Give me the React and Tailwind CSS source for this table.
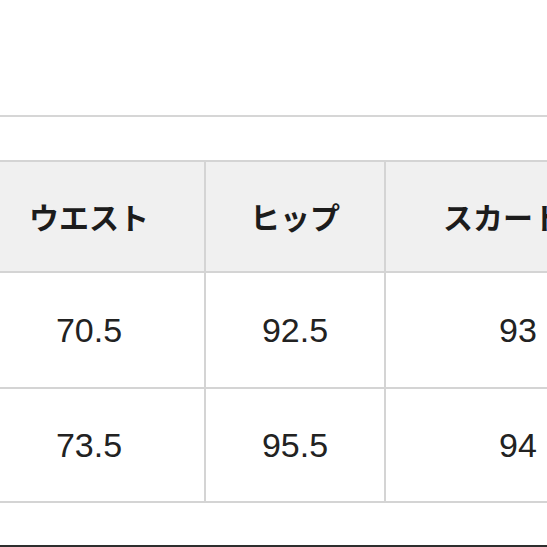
export default function App() {
  const head = ['ウエスト', 'ヒップ', 'スカート丈'];
  const rows = [
    ['70.5', '92.5', '93'],
    ['73.5', '95.5', '94'],
  ];
  const widths = ['w-[232px]', 'w-[180px]', 'w-[266px]'];

  return (
    <div className="relative w-[547px] h-[547px] overflow-hidden bg-white">
      <div className="h-[115px]" />
      <div className="h-[2px] bg-[#d6d6d6]" />
      <div className="h-[43px]" />
      <table
        className="ml-[-28px] border-collapse table-fixed w-[678px]"
        style={{ fontFamily: '"Liberation Sans", Arial, sans-serif' }}
      >
        <thead>
          <tr className="bg-[#f0f0f0]">
            {head.map((h, i) => (
              <th
                key={i}
                className={`${widths[i]} h-[111px] border-2 border-[#d4d4d4] p-0 text-center align-middle text-[30px] font-bold text-[#1c1c1c]`}
                style={{ fontFamily: '"Noto Sans CJK JP", sans-serif' }}
              >
                {h}
              </th>
            ))}
          </tr>
        </thead>
        <tbody>
          {rows.map((r, ri) => (
            <tr key={ri}>
              {r.map((c, ci) => (
                <td
                  key={ci}
                  className={`${ri === 0 ? 'h-[116px]' : 'h-[114px]'} border-2 border-[#d4d4d4] p-0 text-center align-middle text-[34px] text-[#222]`}
                >
                  {c}
                </td>
              ))}
            </tr>
          ))}
        </tbody>
      </table>
      <div className="absolute left-0 right-0 top-[545px] h-[2px] bg-[#2e2e2e]" />
    </div>
  );
}
